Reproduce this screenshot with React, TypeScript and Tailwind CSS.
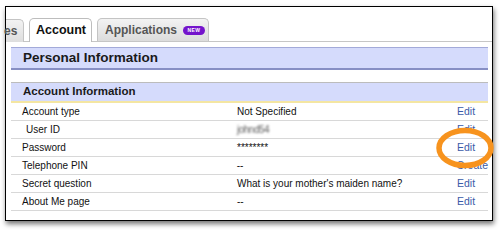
import React from 'react';

interface Row {
  label: string;
  value: React.ReactNode;
  action: string;
  indent?: boolean;
}

const rows: Row[] = [
  { label: 'Account type', value: 'Not Specified', action: 'Edit' },
  {
    label: 'User ID',
    value: <span className="text-[#5e5e5e] blur-[0.9px] tracking-[-0.5px]">johnd54</span>,
    action: 'Edit',
    indent: true,
  },
  { label: 'Password', value: '********', action: 'Edit' },
  { label: 'Telephone PIN', value: '--', action: 'Create' },
  { label: 'Secret question', value: "What is your mother's maiden name?", action: 'Edit' },
  { label: 'About Me page', value: '--', action: 'Edit' },
];

function Tabs() {
  return (
    <div className="flex items-end h-[35px] pl-0 border-b border-[#c6c6c6]">
      <div className="h-[23px] w-[18px] -mb-px rounded-tr-[5px] border-t border-r border-[#c4c4c4] bg-gradient-to-b from-[#f2f2f2] to-[#dedede] flex items-center">
        <span className="text-[12px] font-bold text-[#555] -ml-[2px]">es</span>
      </div>
      <div className="ml-[5px] h-[24px] w-[63px] -mb-px rounded-t-[5px] border border-b-0 border-[#bdbdbd] bg-white flex items-center pl-[6px]">
        <span className="text-[12.5px] font-bold text-[#111]">Account</span>
      </div>
      <div className="ml-[5px] h-[23px] w-[112px] rounded-t-[5px] border border-b-0 border-[#c4c4c4] bg-gradient-to-b from-[#f3f3f3] to-[#dcdcdc] flex items-center pl-[7px] gap-[6px]">
        <span className="text-[12px] font-bold text-[#555]">Applications</span>
        <span className="h-[9px] w-[22px] rounded-full bg-[#7414cc] text-white text-[5px] font-bold leading-[9px] text-center tracking-[0.5px]">
          NEW
        </span>
      </div>
    </div>
  );
}

export default function App() {
  return (
    <div
      className="w-[500px] h-[230px] bg-white relative overflow-hidden"
      style={{ fontFamily: '"Liberation Sans", Arial, sans-serif' }}
    >
      <div className="absolute left-[5px] top-[6px] w-[488px] h-[215px] border border-black bg-white shadow-[1px_3px_5px_rgba(0,0,0,0.55)]">
        <Tabs />
        <div className="ml-[5px] w-[477px]">
          <div className="mt-[5px] h-[23px] bg-[#d5dbfc] border-t border-[#a3aad9] border-b-2 border-b-[#878fc4] flex items-center pl-[12px]">
            <span className="text-[13.5px] font-bold text-[#1a1a1a]">Personal Information</span>
          </div>
          <div className="mt-[12px] h-[21px] bg-[#d5dbfc] border-t border-[#bcbcbc] border-b-2 border-b-[#f4e6a2] flex items-center pl-[12px]">
            <span className="text-[11.5px] font-bold text-[#1a1a1a]">Account Information</span>
          </div>
          {rows.map((row) => (
            <div
              key={row.label}
              className="h-[18px] border-b border-[#d8d8d8] flex items-center text-[10px] text-[#111]"
            >
              <span className={row.indent ? 'w-[226px] pl-[15px]' : 'w-[226px] pl-[11px]'}>{row.label}</span>
              <span className="w-[220px]">{row.value}</span>
              <span className="text-[#3a5ba8] text-[10.5px]">{row.action}</span>
            </div>
          ))}
        </div>
      </div>
      <svg className="absolute left-[434px] top-[126px]" width="62" height="44" viewBox="0 0 62 44">
        <ellipse cx="31" cy="22" rx="26" ry="17.5" fill="none" stroke="#f7931e" strokeWidth="5.5" />
      </svg>
    </div>
  );
}
